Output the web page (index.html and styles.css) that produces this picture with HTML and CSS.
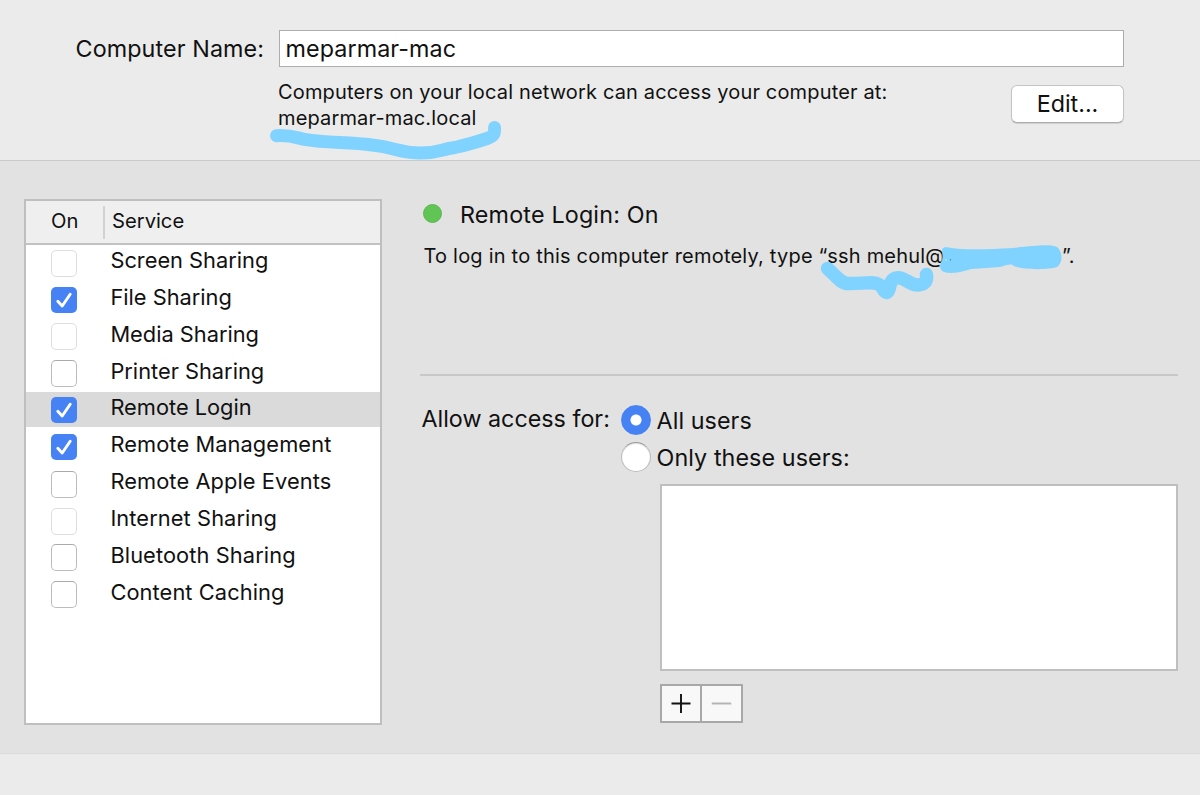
FILE: index.html
```html
<!DOCTYPE html>
<html lang="en">
<head>
<meta charset="utf-8">
<title>Sharing</title>
<link rel="stylesheet" href="styles.css">
</head>
<body>
<div class="window">
  <header class="identity">
    <label class="identity-label" for="name"><span class="t-name">Computer Name:</span></label>
    <div class="identity-body">
      <div class="name-field" id="name"><span class="t-host">meparmar-mac</span></div>
      <div class="identity-info">
        <p class="hint"><span class="t-hint">Computers on your local network can access your computer at:</span><br><span class="t-local">meparmar-mac.local</span></p>
        <button class="edit"><span class="t-edit">Edit...</span></button>
      </div>
    </div>
  </header>
  <main class="content">
    <section class="services">
      <div class="services-head"><span class="col-on">On</span><span class="col-service">Service</span></div>
      <ul class="rows">
        <li class="row"><i class="box dim"></i><span>Screen Sharing</span></li>
        <li class="row"><i class="box on"><svg viewBox="0 0 26 26"><path d="M6.800 14.200 11.200 19 19.200 7.200"/></svg></i><span>File Sharing</span></li>
        <li class="row"><i class="box dim"></i><span>Media Sharing</span></li>
        <li class="row"><i class="box"></i><span>Printer Sharing</span></li>
        <li class="row selected"><i class="box on"><svg viewBox="0 0 26 26"><path d="M6.800 14.200 11.200 19 19.200 7.200"/></svg></i><span>Remote Login</span></li>
        <li class="row"><i class="box on"><svg viewBox="0 0 26 26"><path d="M6.800 14.200 11.200 19 19.200 7.200"/></svg></i><span class="wide">Remote Management</span></li>
        <li class="row"><i class="box"></i><span class="wide">Remote Apple Events</span></li>
        <li class="row"><i class="box dim"></i><span class="wide">Internet Sharing</span></li>
        <li class="row"><i class="box"></i><span class="wide">Bluetooth Sharing</span></li>
        <li class="row"><i class="box"></i><span class="wide">Content Caching</span></li>
      </ul>
    </section>
    <section class="detail">
      <h1 class="status"><i class="dot"></i><span class="t-status">Remote Login: On</span></h1>
      <p class="ssh"><span class="t-ssh">To log in to this computer remotely, type “ssh mehul@</span><span class="ssh-end">”.</span></p>
      <div class="access">
        <span class="access-label"><span class="t-allow">Allow access for:</span></span>
        <div class="access-body">
          <div class="radio-row"><i class="radio checked"></i><span class="t-all">All users</span></div>
          <div class="radio-row"><i class="radio"></i><span class="t-only">Only these users:</span></div>
          <div class="users"></div>
          <div class="segments">
            <button class="segment" aria-label="Add"><svg viewBox="0 0 40 36"><path d="M10 18H30M20 8V28"/></svg></button>
            <button class="segment off" aria-label="Remove"><svg viewBox="0 0 40 36"><path d="M10 18H30"/></svg></button>
          </div>
        </div>
      </div>
    </section>
  </main>
  <footer class="footer"></footer>
  <svg class="marks" viewBox="0 0 1200 795">
    <path class="stroke" d="M276.500 135.700C292 135 297 138 306 139.700C325 143 350 142 372 145C397 147.500 398 153 421 153C439 153 441 149 455 147.500Q474 143 487 138.500C494 136 495 134 494.500 127.500"/>
    <path class="stroke thick" d="M827.500 268.500C837 277 841 283.500 848 283.500C861 284 873 281 879 284.500C884 288 883 292 887 292.500C891 291 888 280 896 278C904 276 909 285 918 285C927 284 927 279 926.500 274.500"/>
    <path class="blob" d="M946 247Q962 251 1013 248C1035 245.500 1051 244 1057 247C1063 252 1063 263 1057 267C1049 270 1023 270 1014 266C1010 263 1007 265.500 1000 267Q987 268 971 269C959 273 950 274 944 272C939 270 939 265 942 260C944 253 939 248 946 247Z"/>
    <circle class="speck" cx="946" cy="260" r="0.800"/>
    <circle class="speck dark" cx="950.500" cy="259.800" r="0.700"/>
  </svg>
</div>
</body>
</html>
```
FILE: styles.css
```css
* { box-sizing: border-box; }
body { margin: 0; font-family: Inter, "Liberation Sans", sans-serif; color: #111; background: #ebebeb; }
button { font: inherit; color: inherit; padding: 0; }
p, h1, ul { margin: 0; padding: 0; font-weight: 400; }
span { white-space: nowrap; }
.window { position: relative; width: 1200px; height: 795px; overflow: hidden; display: flex; flex-direction: column; }

.identity { height: 161px; flex: none; display: flex; gap: 15px; padding: 30px 76px 0 75.500px; border-bottom: 1px solid #cbcbcb; background: #ebebeb; }
.identity-label { width: 188px; font-size: 23.3px; line-height: 37px; letter-spacing: .11px; }
.identity-body { flex: 1; }
.name-field { height: 37px; border: 1px solid #adadad; background: #fff; padding-left: 6px; font-size: 23.3px; line-height: 35px; letter-spacing: .09px; }
.identity-info { display: flex; justify-content: space-between; }
.hint { padding-top: 12px; margin-left: -.500px; font-size: 20px; line-height: 26px; letter-spacing: .15px; }
.edit { width: 113px; height: 38px; margin-top: 18px; border: 1px solid #c4c4c4; border-bottom-color: #acacac; border-radius: 6px; background: #fff; box-shadow: 0 1px 1px rgba(0,0,0,.12); font-size: 23.3px; line-height: 34px; }

.content { height: 593px; flex: none; display: flex; gap: 38px; padding: 38px 22px 0 24px; background: #e2e2e2; border-bottom: 1px solid #dadada; }
.services { width: 358px; height: 526px; border: 2px solid #bfbfbf; background: #fff; }
.services-head { height: 42px; display: flex; align-items: center; background: #efefef; font-size: 20.2px; }
.col-on { width: 79px; padding-left: 25px; border-right: 2px solid #d2d2d2; height: 33px; line-height: 29px; }
.col-service { padding-left: 7px; height: 33px; line-height: 29px; }
.rows { list-style: none; border-top: 2px solid #c2c2c2; }
.row { height: 36.850px; display: flex; align-items: flex-start; padding-left: 25.400px; gap: 33px; font-size: 21.8px; line-height: 31.700px; }
.wide { letter-spacing: .1px; }
.box { width: 26px; height: 27px; margin-top: 4.700px; border: 1.500px solid #bcbcbc; border-top-color: #aaa; border-radius: 5px; background: #fff; flex: none; }
.box.dim { border-color: #dedede; }
.box.on { height: 26px; margin-top: 5px; border: 0; background: #4682f3; }
.box svg { display: block; width: 26px; height: 26px; fill: none; stroke: #fff; stroke-width: 2.900; stroke-linecap: round; stroke-linejoin: round; }
.selected { background: linear-gradient(#dadada, #dadada) 0 0 / 100% 35px no-repeat; }

.detail { flex: 1; }
.status { display: flex; align-items: center; gap: 18px; height: 31px; padding-left: 3px; font-size: 23.3px; line-height: 31px; letter-spacing: .18px; }
.dot { width: 19px; height: 19px; border-radius: 50%; background: #60c554; border: 1px solid #58b94d; margin-top: -2px; }
.ssh { display: flex; justify-content: space-between; width: 654.500px; padding: 12px 0 0 3.500px; font-size: 20px; line-height: 28px; height: 145px; }
.t-ssh { letter-spacing: .21px; }
.access { display: flex; border-top: 2px solid #c8c8c8; margin-top: -1px; padding-top: 27px; }
.access-label { width: 201px; padding-left: 1.500px; font-size: 23.3px; line-height: 31px; }
.access-body { flex: 1; }
.radio-row { display: flex; align-items: center; gap: 5.500px; height: 37px; margin-top: -1px; margin-bottom: 1px; font-size: 23.3px; line-height: 37px; letter-spacing: .08px; }
.radio { width: 30px; height: 30px; border-radius: 50%; background: #fff; border: 1px solid #bbb; border-top-color: #999; box-shadow: inset 0 1px 1px #ddd; margin-top: -2px; }
.radio.checked { background: radial-gradient(circle, #fff 5px, #4682f3 6px); border-color: #4682f3; box-shadow: none; }
.users { margin: 8px 0 0 39px; height: 187px; background: #fff; border: 2px solid #bfbfbf; }
.segments { display: flex; margin: 13px 0 0 39px; }
.segment { width: 42px; height: 39px; border: 2px solid #a8a8a8; background: #f8f8f8; }
.segment + .segment { width: 43px; margin-left: -2px; }
.segment svg { display: block; width: 100%; height: 35px; stroke: #111; stroke-width: 2; fill: none; }
.segment.off svg { stroke: #b4b4b4; }
.footer { flex: 1; background: #ebebeb; }

.marks { position: absolute; inset: 0; width: 1200px; height: 795px; pointer-events: none; }
.stroke { fill: none; stroke: #80d3fe; stroke-width: 13; stroke-linecap: round; stroke-linejoin: round; }
.thick { stroke-width: 13.500; }
.blob { fill: #80d3fe; }
.speck { fill: #c9eeff; }
.dark { fill: #557f99; }
```
